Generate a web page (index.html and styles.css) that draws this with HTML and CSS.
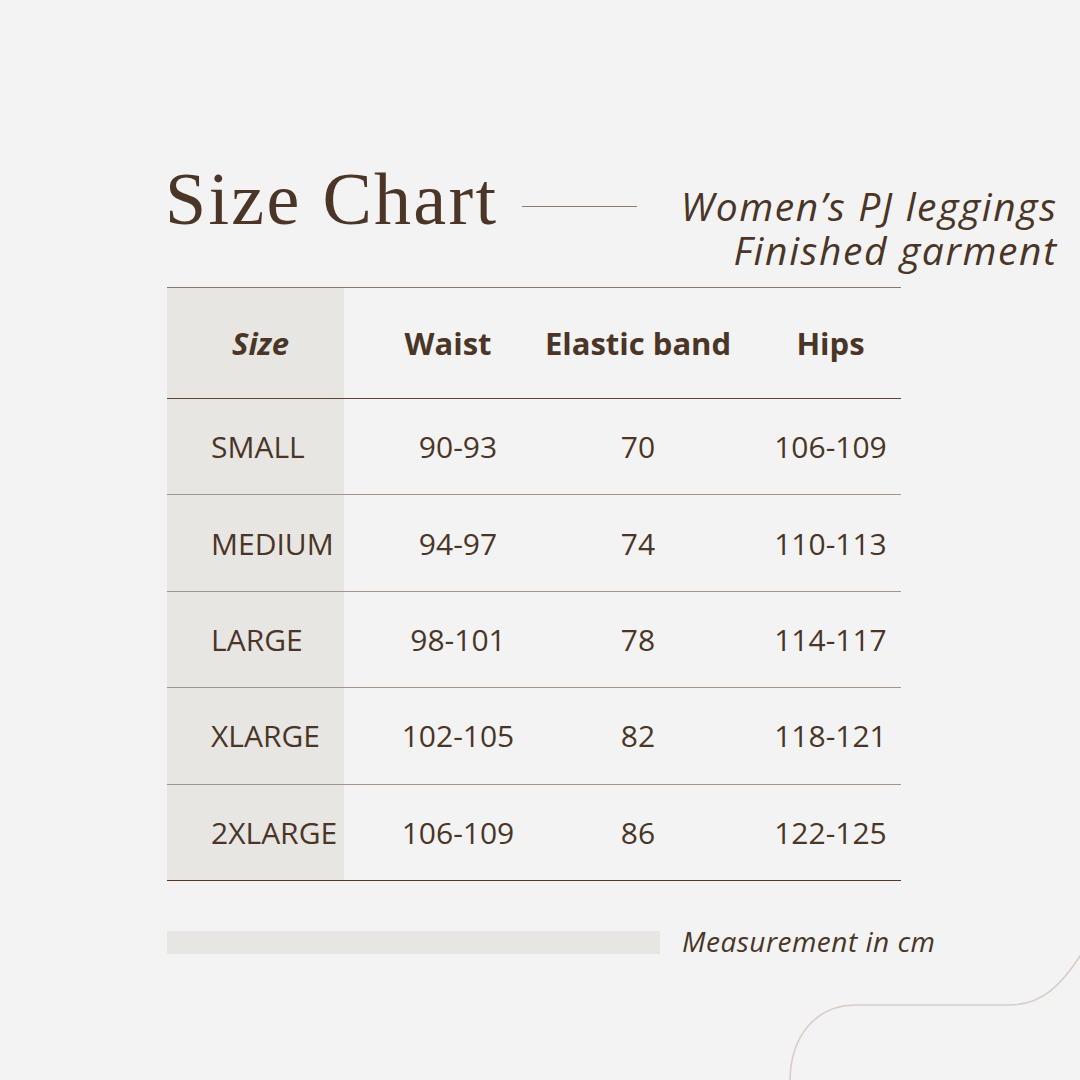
FILE: index.html
```html
<!DOCTYPE html>
<html lang="en">
<head>
<meta charset="utf-8">
<title>Size Chart</title>
<link rel="stylesheet" href="styles.css">
</head>
<body>
<div class="page">
  <header class="head">
    <h1 class="title">Size Chart</h1>
    <span class="rule"></span>
    <p class="subtitle"><span class="sub-line">Women’s PJ leggings</span><span class="sub-line">Finished garment</span></p>
  </header>

  <div class="chart">
    <div class="row row-head">
      <div class="cell c-size">Size</div>
      <div class="cell c-waist">Waist</div>
      <div class="cell c-band">Elastic band</div>
      <div class="cell c-hips">Hips</div>
    </div>
    <div class="row">
      <div class="cell c-size">SMALL</div>
      <div class="cell c-waist">90-93</div>
      <div class="cell c-band">70</div>
      <div class="cell c-hips">106-109</div>
    </div>
    <div class="row">
      <div class="cell c-size">MEDIUM</div>
      <div class="cell c-waist">94-97</div>
      <div class="cell c-band">74</div>
      <div class="cell c-hips">110-113</div>
    </div>
    <div class="row">
      <div class="cell c-size">LARGE</div>
      <div class="cell c-waist">98-101</div>
      <div class="cell c-band">78</div>
      <div class="cell c-hips">114-117</div>
    </div>
    <div class="row">
      <div class="cell c-size">XLARGE</div>
      <div class="cell c-waist">102-105</div>
      <div class="cell c-band">82</div>
      <div class="cell c-hips">118-121</div>
    </div>
    <div class="row row-last">
      <div class="cell c-size">2XLARGE</div>
      <div class="cell c-waist">106-109</div>
      <div class="cell c-band">86</div>
      <div class="cell c-hips">122-125</div>
    </div>
  </div>

  <footer class="foot">
    <span class="bar"></span>
    <span class="note">Measurement in cm</span>
  </footer>

  <svg class="curve" width="300" height="140" viewBox="780 940 300 140" aria-hidden="true">
    <path d="M790 1082 C790 1036 816 1005 856 1005 L1010 1005 C1042 1005 1062 985 1084 950" fill="none" stroke="#d8cdc7" stroke-width="1.6"/>
  </svg>
</div>
</body>
</html>
```

FILE: styles.css
```css
html, body {
  margin: 0;
  padding: 0;
  background: #f3f3f3;
}

.page {
  position: relative;
  width: 1080px;
  height: 1080px;
  box-sizing: border-box;
  padding: 162px 24px 0 165px;
  color: #4a3527;
  overflow: hidden;
}

.head {
  display: flex;
  align-items: flex-start;
}

.title {
  margin: 0;
  font-family: "Liberation Serif", "DejaVu Serif", serif;
  font-weight: normal;
  font-size: 74px;
  line-height: 74px;
  letter-spacing: 2.3px;
  white-space: nowrap;
}

.rule {
  width: 115px;
  height: 1px;
  background: #8b7d74;
  margin: 44px 0 0 24px;
}

.subtitle {
  display: flex;
  flex-direction: column;
  align-items: flex-end;
  margin: 22px 0 0 auto;
  font-family: "Open Sans", "Liberation Sans", sans-serif;
  font-style: italic;
  font-size: 39px;
  letter-spacing: 1.6px;
  white-space: nowrap;
}

.sub-line {
  display: block;
  height: 44px;
  line-height: 44px;
  margin-right: -1.6px;
}

.chart {
  margin: 15px 0 0 2px;
  width: 734px;
  border-top: 1px solid #857870;
  font-family: "Open Sans", "Liberation Sans", sans-serif;
}

.row {
  display: grid;
  grid-template-columns: 177px 228px 132px 1fr;
  height: 95.4px;
  border-bottom: 1px solid #a0958f;
  font-size: 30px;
}

.row-head {
  height: 110px;
  border-bottom-color: #5a4436;
  font-weight: 700;
  font-size: 31px;
}

.row-last {
  border-bottom-color: #4e392b;
}

.cell {
  display: flex;
  align-items: center;
  justify-content: center;
  white-space: nowrap;
}

.c-size {
  background: #e8e6e2;
  justify-content: flex-start;
  padding-left: 44px;
}

.row-head .c-size {
  justify-content: center;
  padding-left: 10px;
  font-style: italic;
}

.row-head .c-waist {
  padding-right: 20px;
}

.c-hips {
  padding-left: 56px;
}

.foot {
  display: flex;
  align-items: center;
  margin: 43px 0 0 2px;
}

.bar {
  width: 493px;
  height: 23px;
  background: #e8e6e2;
}

.note {
  margin-left: 22px;
  font-family: "Open Sans", "Liberation Sans", sans-serif;
  font-style: italic;
  font-size: 28px;
  letter-spacing: 0.5px;
  position: relative;
  top: -2px;
}

.curve {
  position: absolute;
  left: 780px;
  top: 940px;
}
```
